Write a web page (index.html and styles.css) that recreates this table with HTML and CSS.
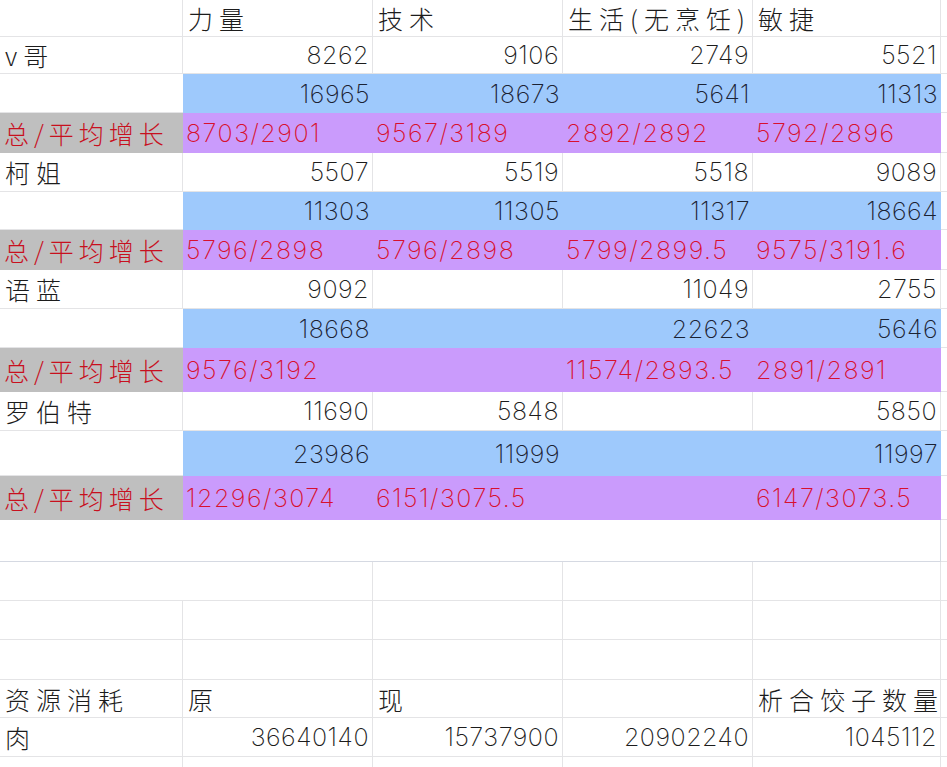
FILE: index.html
```html
<!DOCTYPE html>
<html lang="zh">
<head>
<meta charset="utf-8">
<title>属性统计</title>
<link rel="stylesheet" href="styles.css">
</head>
<body>
<div class="sheet">
  <div class="row h37">
    <div class="c"></div>
    <div class="c t cjk">力量</div>
    <div class="c t cjk">技术</div>
    <div class="c t cjk">生活(无烹饪)</div>
    <div class="c t cjk">敏捷</div>
    <div class="c x"></div>
  </div>

  <div class="row h37">
    <div class="c t cjk">v哥</div>
    <div class="c n">8262</div>
    <div class="c n">9106</div>
    <div class="c n">2749</div>
    <div class="c n">5521</div>
    <div class="c x"></div>
  </div>
  <div class="row h39 sum">
    <div class="c"></div>
    <div class="b n">16965</div>
    <div class="b n">18673</div>
    <div class="b n">5641</div>
    <div class="b n">11313</div>
    <div class="c x"></div>
  </div>
  <div class="row h40 avg">
    <div class="g cjk">总/平均增长</div>
    <div class="p">8703/2901</div>
    <div class="p">9567/3189</div>
    <div class="p">2892/2892</div>
    <div class="p">5792/2896</div>
    <div class="c x"></div>
  </div>

  <div class="row h39">
    <div class="c t cjk">柯姐</div>
    <div class="c n">5507</div>
    <div class="c n">5519</div>
    <div class="c n">5518</div>
    <div class="c n">9089</div>
    <div class="c x"></div>
  </div>
  <div class="row h38 sum">
    <div class="c"></div>
    <div class="b n">11303</div>
    <div class="b n">11305</div>
    <div class="b n">11317</div>
    <div class="b n">18664</div>
    <div class="c x"></div>
  </div>
  <div class="row h40 avg">
    <div class="g cjk">总/平均增长</div>
    <div class="p">5796/2898</div>
    <div class="p">5796/2898</div>
    <div class="p">5799/2899.5</div>
    <div class="p">9575/3191.6</div>
    <div class="c x"></div>
  </div>

  <div class="row h39">
    <div class="c t cjk">语蓝</div>
    <div class="c n">9092</div>
    <div class="c n"></div>
    <div class="c n">11049</div>
    <div class="c n">2755</div>
    <div class="c x"></div>
  </div>
  <div class="row h39 sum">
    <div class="c"></div>
    <div class="b n">18668</div>
    <div class="b n"></div>
    <div class="b n">22623</div>
    <div class="b n">5646</div>
    <div class="c x"></div>
  </div>
  <div class="row h44 avg">
    <div class="g cjk">总/平均增长</div>
    <div class="p">9576/3192</div>
    <div class="p"></div>
    <div class="p">11574/2893.5</div>
    <div class="p">2891/2891</div>
    <div class="c x"></div>
  </div>

  <div class="row h39">
    <div class="c t cjk">罗伯特</div>
    <div class="c n">11690</div>
    <div class="c n">5848</div>
    <div class="c n"></div>
    <div class="c n">5850</div>
    <div class="c x"></div>
  </div>
  <div class="row h45 sum">
    <div class="c"></div>
    <div class="b n">23986</div>
    <div class="b n">11999</div>
    <div class="b n"></div>
    <div class="b n">11997</div>
    <div class="c x"></div>
  </div>
  <div class="row h44 avg">
    <div class="g cjk">总/平均增长</div>
    <div class="p">12296/3074</div>
    <div class="p">6151/3075.5</div>
    <div class="p"></div>
    <div class="p">6147/3073.5</div>
    <div class="c x"></div>
  </div>

  <div class="row h42">
    <div class="c blank"></div>
    <div class="c x"></div>
  </div>
  <div class="row h39">
    <div class="c span2"></div>
    <div class="c"></div>
    <div class="c"></div>
    <div class="c"></div>
    <div class="c x"></div>
  </div>
  <div class="row h39">
    <div class="c"></div>
    <div class="c"></div>
    <div class="c"></div>
    <div class="c"></div>
    <div class="c"></div>
    <div class="c x"></div>
  </div>
  <div class="row h40">
    <div class="c"></div>
    <div class="c"></div>
    <div class="c"></div>
    <div class="c"></div>
    <div class="c"></div>
    <div class="c x"></div>
  </div>
  <div class="row h38">
    <div class="c t cjk">资源消耗</div>
    <div class="c t cjk">原</div>
    <div class="c t cjk">现</div>
    <div class="c"></div>
    <div class="c t cjk">析合饺子数量</div>
    <div class="c x"></div>
  </div>
  <div class="row h39">
    <div class="c t cjk">肉</div>
    <div class="c n">36640140</div>
    <div class="c n">15737900</div>
    <div class="c n">20902240</div>
    <div class="c n">1045112</div>
    <div class="c x"></div>
  </div>
  <div class="row h39">
    <div class="c"></div>
    <div class="c"></div>
    <div class="c"></div>
    <div class="c"></div>
    <div class="c"></div>
    <div class="c x"></div>
  </div>
</div>
</body>
</html>
```

FILE: styles.css
```css
html, body {
  margin: 0;
  padding: 0;
  background: #ffffff;
}

body {
  width: 947px;
  height: 767px;
  overflow: hidden;
  font-family: "Inter", "Noto Sans CJK SC", sans-serif;
  font-weight: 200;
  font-size: 25px;
  color: #1c1c1c;
}

.sheet {
  display: flex;
  flex-direction: column;
}

.row {
  display: grid;
  grid-template-columns: 183px 190px 190px 190px 188px 1fr;
}

.h37 { height: 37px; }
.h38 { height: 38px; }
.h39 { height: 39px; }
.h40 { height: 40px; }
.h42 { height: 42px; }
.h44 { height: 44px; }
.h45 { height: 45px; }

.row > div {
  box-sizing: border-box;
  display: flex;
  align-items: center;
  white-space: nowrap;
  min-width: 0;
}

.c {
  border-right: 1px solid #e4e4e6;
  border-bottom: 1px solid #e4e4e6;
}

.sum > .c:first-child {
  border-right: none;
}

.x {
  border-right: none;
}

.t {
  padding-left: 5px;
}

.cjk {
  letter-spacing: 6px;
  font-family: "Noto Sans CJK SC", sans-serif;
  font-weight: 200;
}

.g.cjk {
  letter-spacing: 5px;
}

.n {
  justify-content: flex-end;
  padding-right: 3px;
  letter-spacing: 0.5px;
}

.b {
  background: #9ec9fc;
  color: #1b2233;
}

.g {
  background: #bfbfbf;
  color: #c8101e;
  padding-left: 4px;
}

.p {
  background: #ca9bfc;
  color: #d8102e;
  padding-left: 3px;
  letter-spacing: 1.5px;
}

.blank {
  grid-column: 1 / 6;
  border-color: #d5d9e2;
}

.span2 {
  grid-column: 1 / 3;
}
```
